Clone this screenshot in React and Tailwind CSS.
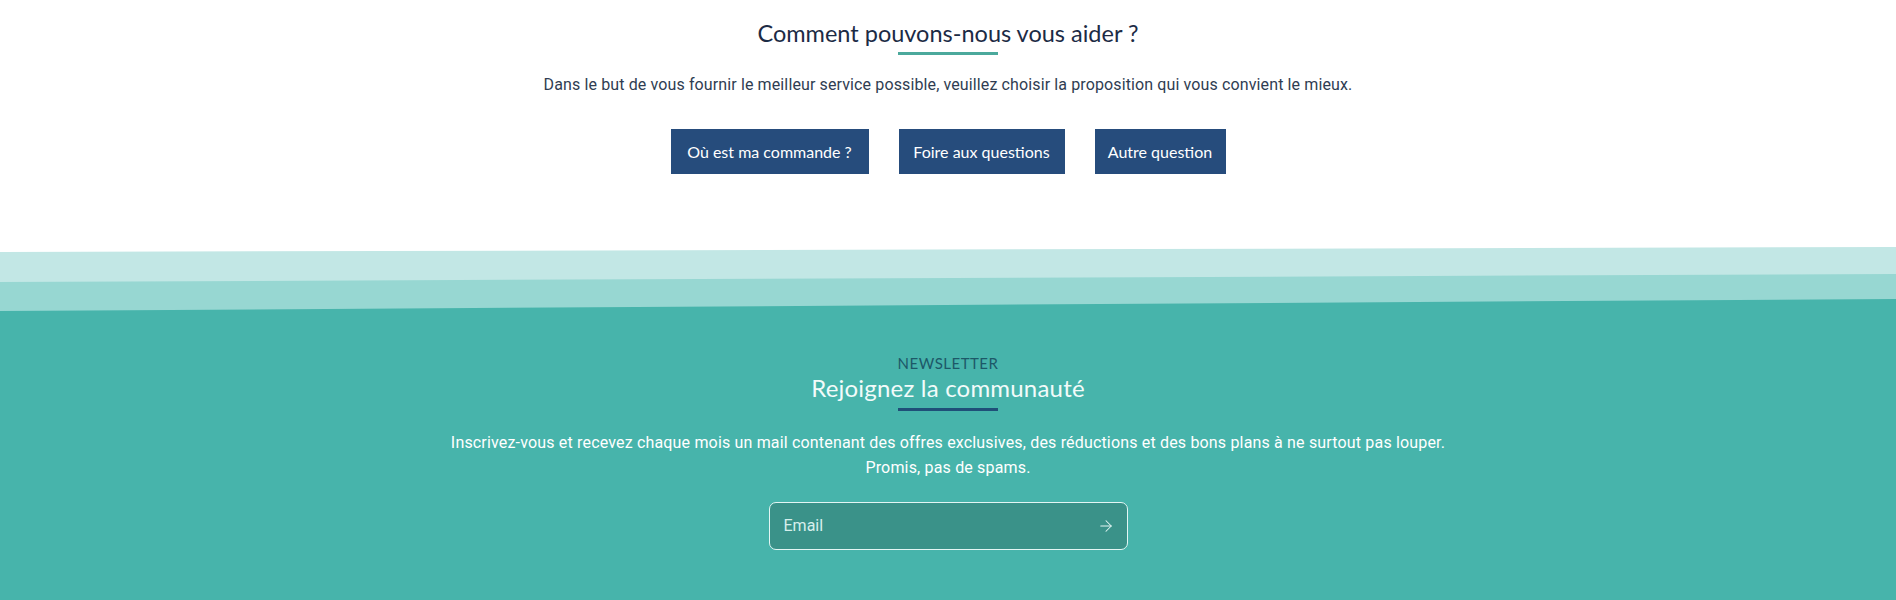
import React from 'react';
import { ArrowRight } from 'lucide-react';

const HEAD = { fontFamily: 'Lato, "Noto Sans", sans-serif' };
const BODY = { fontFamily: 'Roboto, "Liberation Sans", sans-serif' };

const actions = [
    { label: 'Où est ma commande ?', w: 'w-[198px]' },
    { label: 'Foire aux questions', w: 'w-[166px]' },
    { label: 'Autre question', w: 'w-[131px]' },
];

const Wave = () => (
    <svg className="block w-full h-[70px]" viewBox="0 0 1896 70" preserveAspectRatio="none">
        <polygon points="0,10 1896,5 1896,70 0,70" fill="#c2e7e5" />
        <polygon points="0,40 1896,32 1896,70 0,70" fill="#97d7d2" />
        <polygon points="0,69 1896,57 1896,70 0,70" fill="#47b4ab" />
    </svg>
);

const App = () => {
    return (
        <div className="min-h-screen bg-white">
            {/* aide */}
            <section className="pt-[15px] h-[242px] flex flex-col items-center">
                <h2 className="text-[23.5px] leading-[36px] text-[#1c2b45]" style={HEAD}>
                    Comment pouvons-nous vous aider ?
                </h2>
                <div className="mt-[1px] w-[100px] h-[3px] bg-[#4ba99c]" />
                <p className="mt-[18px] text-[16px] leading-[24px] tracking-[0.12px] text-[#2f3d52]" style={BODY}>
                    Dans le but de vous fournir le meilleur service possible, veuillez choisir la proposition qui vous convient le mieux.
                </p>
                <div className="mt-[32px] flex gap-[30px]">
                    {actions.map((a) => (
                        <button
                            key={a.label}
                            className={`${a.w} h-[45px] bg-[#264c7c] text-white text-[16px] flex items-center justify-center`}
                            style={HEAD}
                        >
                            {a.label}
                        </button>
                    ))}
                </div>
            </section>

            <Wave />

            {/* newsletter */}
            <section className="bg-[#47b4ab] pt-[41px] pb-[60px] flex flex-col items-center">
                <p className="text-[15px] leading-[20px] tracking-[0.5px] text-[#1d5868]" style={HEAD}>
                    NEWSLETTER
                </p>
                <h2 className="text-[24px] leading-[30px] tracking-[0.2px] text-[#f2fbfa]" style={HEAD}>
                    Rejoignez la communauté
                </h2>
                <div className="mt-[5px] w-[100px] h-[3px] bg-[#1f4f78]" />
                <p className="mt-[19px] text-[16px] leading-[25px] tracking-[0.17px] text-white text-center" style={BODY}>
                    Inscrivez-vous et recevez chaque mois un mail contenant des offres exclusives, des réductions et des bons plans à ne surtout pas louper.
                    <br />
                    Promis, pas de spams.
                </p>
                <form
                    className="mt-[22px] w-[359px] h-[48px] rounded-[7px] border border-[#e3f6f4] bg-[#3a9289] flex items-center pl-[14px] pr-[12px]"
                    onSubmit={(e) => e.preventDefault()}
                >
                    <input
                        type="email"
                        placeholder="Email"
                        className="flex-1 bg-transparent outline-none text-[16px] text-white placeholder:text-[#d6efec]"
                        style={BODY}
                    />
                    <ArrowRight size={18} strokeWidth={1.4} className="text-[#e3f6f4]" />
                </form>
            </section>
        </div>
    );
};

export default App;
